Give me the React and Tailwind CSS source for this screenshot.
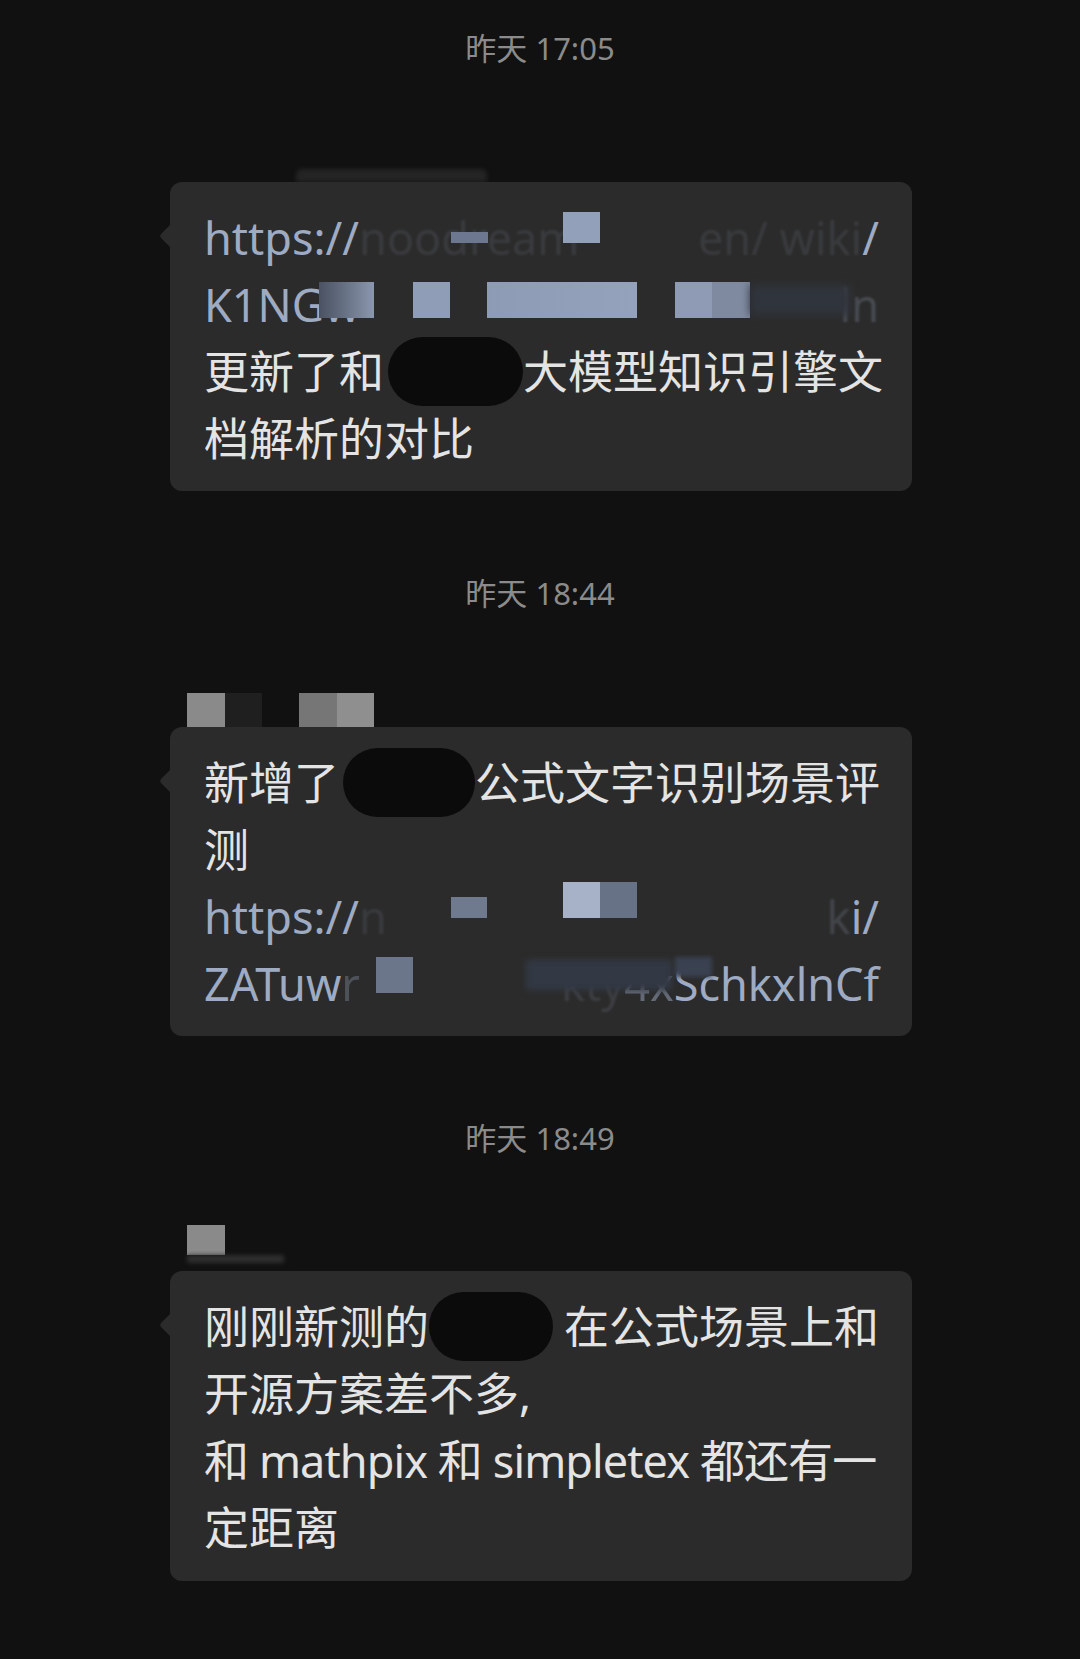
import React from 'react';

const FONT = "font-['Noto_Sans','Noto_Sans_CJK_SC',sans-serif]";

// small rounded tail on the left side of a bubble
const Tail = () => (
  <svg className="absolute left-[-11px] top-[42px]" width="12" height="24" viewBox="0 0 12 24">
    <path d="M12 0 L2.5 9.5 Q0 12 2.5 14.5 L12 24 Z" fill="#2b2b2b" />
  </svg>
);

const Timestamp = ({ text, className = '' }) => (
  <div className={`h-[40px] flex items-center justify-center text-[31px] text-[#8b8b8b] ${className}`}>
    {text}
  </div>
);

const Line = ({ children, className = '' }) => (
  <div className={`relative flex items-center h-[67px] whitespace-nowrap ${className}`}>{children}</div>
);

// black pill used to hide a name in the text
const Blob = ({ className = '' }) => (
  <span className={`inline-block shrink-0 h-[69px] rounded-full bg-[#0b0b0b] ${className}`} />
);

// mosaic square laid over the link text
const Mosaic = ({ className = '' }) => <span className={`absolute ${className}`} />;

const Bubble = ({ children, className = '' }) => (
  <div className={`relative ml-[170px] w-[742px] rounded-[12px] bg-[#2b2b2b] pl-[34px] pr-[33px] pt-[22px] text-[45px] text-[#e4e4e4] ${className}`}>
    <Tail />
    {children}
  </div>
);

export default function App() {
  return (
    <div className={`min-h-[1659px] bg-[#111111] pt-[28px] ${FONT}`}>
      <Timestamp text="昨天 17:05" />

      {/* blurred sender name */}
      <div className="mt-[79px] h-[35px] flex items-end">
        <div className="ml-[296px] h-[13px] w-[191px] rounded-t-[6px] bg-[#242424] blur-[2px]" />
      </div>

      <Bubble className="pb-[19px]">
        <Line className="justify-between text-[#9eabc3]">
          <span>
            https://<span className="opacity-[0.12] blur-[1px]">noodream</span>
          </span>
          <span>
            <span className="opacity-[0.12] blur-[1px]">en/ wiki</span>/
          </span>
          <Mosaic className="left-[247px] top-[28px] w-[37px] h-[11px] bg-[#6d7890]" />
          <Mosaic className="left-[359px] top-[8px] w-[37px] h-[31px] bg-[#93a0ba]" />
        </Line>
        <Line className="justify-between text-[#9eabc3]">
          <span>K1NGw</span>
          <span className="opacity-25 blur-[1px]">ln</span>
          <Mosaic className="left-[115px] top-[11px] w-[55px] h-[36px] bg-gradient-to-r from-[#4a5262] to-[#8b97ae]" />
          <Mosaic className="left-[209px] top-[11px] w-[37px] h-[36px] bg-[#909db6]" />
          <Mosaic className="left-[283px] top-[11px] w-[150px] h-[36px] bg-gradient-to-r from-[#8e9bb4] to-[#95a2bb]" />
          <Mosaic className="left-[471px] top-[11px] w-[37px] h-[36px] bg-[#8f9bb4]" />
          <Mosaic className="left-[508px] top-[11px] w-[38px] h-[36px] bg-[#7f8aa0]" />
          <Mosaic className="left-[546px] top-[14px] w-[100px] h-[30px] bg-[#30343c] blur-[4px]" />
        </Line>
        <Line>
          <span>更新了和</span>
          <Blob className="ml-[4px] w-[135px]" />
          <span>大模型知识引擎文</span>
        </Line>
        <Line>档解析的对比</Line>
      </Bubble>

      <Timestamp text="昨天 18:44" className="mt-[82px]" />

      {/* pixelated sender name */}
      <div className="mt-[79px] h-[35px] flex items-start pt-[1px] pl-[187px]">
        <div className="h-[35px] w-[38px] bg-[#8a8a8a]" />
        <div className="h-[35px] w-[37px] bg-[#1f1f1f]" />
        <div className="h-[35px] w-[37px]" />
        <div className="h-[35px] w-[38px] bg-[#767676]" />
        <div className="h-[35px] w-[37px] bg-[#8f8f8f]" />
      </div>

      <Bubble className="pb-[19px]">
        <Line>
          <span>新增了</span>
          <Blob className="ml-[4px] w-[132px]" />
          <span>公式文字识别场景评</span>
        </Line>
        <Line>测</Line>
        <Line className="justify-between text-[#9eabc3]">
          <span>
            https://<span className="opacity-[0.12] blur-[1px]">n</span>
          </span>
          <span>
            <span className="opacity-20 blur-[1px]">k</span>i/
          </span>
          <Mosaic className="left-[247px] top-[14px] w-[36px] h-[21px] bg-[#6f7a8f]" />
          <Mosaic className="left-[359px] top-[-1px] w-[37px] h-[36px] bg-[#a7b2c8]" />
          <Mosaic className="left-[396px] top-[-1px] w-[37px] h-[36px] bg-[#687286]" />
        </Line>
        <Line className="justify-between text-[#9eabc3]">
          <span>
            ZATuw<span className="opacity-30">r</span>
          </span>
          <span>
            <span className="opacity-15 blur-[1px]">kty</span>
            <span className="opacity-50">4x</span>SchkxlnCf
          </span>
          <Mosaic className="left-[172px] top-[7px] w-[37px] h-[36px] bg-[#6c768a]" />
          <Mosaic className="left-[322px] top-[10px] w-[146px] h-[30px] bg-[#323844] blur-[3px]" />
          <Mosaic className="left-[471px] top-[7px] w-[37px] h-[20px] bg-[#3a4150] blur-[2px]" />
        </Line>
      </Bubble>

      <Timestamp text="昨天 18:49" className="mt-[82px]" />

      <div className="mt-[67px] h-[46px] pl-[187px]">
        <div className="h-[30px] w-[38px] bg-[#8a8a8a]" />
        <div className="h-[8px] w-[97px] bg-[#2e2e2e] blur-[2px]" />
      </div>

      <Bubble className="pb-[20px]">
        <Line>
          <span>刚刚新测的</span>
          <Blob className="w-[124px]" />
          <span className="ml-[11px]">在公式场景上和</span>
        </Line>
        <Line>开源方案差不多,</Line>
        <Line className="tracking-[-0.9px]">和 mathpix 和 simpletex 都还有一</Line>
        <Line>定距离</Line>
      </Bubble>
    </div>
  );
}
